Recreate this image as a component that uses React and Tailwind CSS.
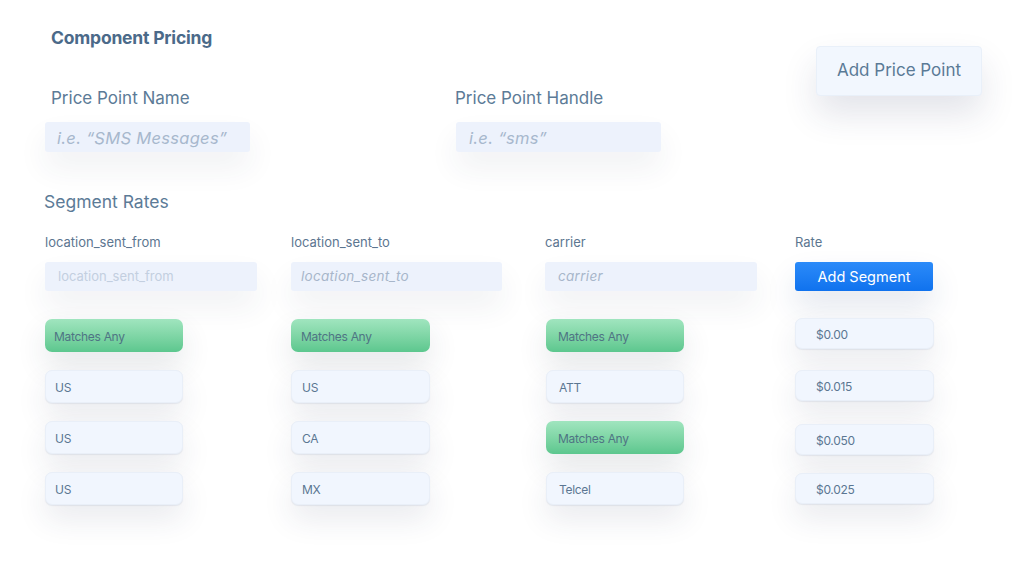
export default function App() {
  const font = { fontFamily: 'Inter, "Noto Sans", sans-serif' };
  const rowBox =
    "flex items-center pt-[2px] rounded-[7px] bg-[#f1f6fe] border border-[#e9eff8] text-[12px] tracking-[-0.3px] text-[#5b7692] shadow-[0_1px_1px_rgba(40,60,110,0.08),0_14px_30px_rgba(40,50,90,0.1)]";
  const green =
    "flex items-center pt-[2px] rounded-[7px] bg-gradient-to-b from-[#a0e5bf] to-[#5cc78e] text-[12px] tracking-[-0.3px] text-[#4f7484] shadow-[0_14px_30px_rgba(40,60,70,0.12)]";
  const col1 = ["Matches Any", "US", "US", "US"];
  const col2 = ["Matches Any", "US", "CA", "MX"];
  const col3 = ["Matches Any", "ATT", "Matches Any", "Telcel"];
  const rates = ["$0.00", "$0.015", "$0.050", "$0.025"];
  const rateTops = ["mt-[27px]", "mt-[21px]", "mt-[23px]", "mt-[18px]"];

  const Col = ({ items, w, pad }) => (
    <div className="flex flex-col gap-[18px] mt-[28px]">
      {items.map((t, i) => (
        <div
          key={i}
          className={`${t === "Matches Any" ? green : rowBox} ${w} h-[33px] ${pad}`}
        >
          {t}
        </div>
      ))}
    </div>
  );

  return (
    <div className="w-[1024px] h-[575px] bg-white overflow-hidden" style={font}>
      <div className="flex">
        <div className="flex flex-col">
          <div className="mt-[26px] ml-[51px] h-6 leading-6 text-[17.5px] font-bold text-[#4b6a89] tracking-[-0.2px]">
            Component Pricing
          </div>
          <div className="flex mt-[36px] ml-[45px]">
            <div className="flex flex-col w-[410px]">
              <div className="ml-[6px] h-6 leading-6 text-[17px] text-[#5c7b97]">
                Price Point Name
              </div>
              <div className="mt-3 w-[205px] h-[30px] rounded-[3px] bg-[#edf2fc] flex items-center pt-[3px] pl-[12px] text-[16.5px] italic text-[#a7b8cd] tracking-[0.3px] shadow-[0_16px_30px_rgba(40,50,90,0.07)]">
                i.e. “SMS Messages”
              </div>
            </div>
            <div className="flex flex-col">
              <div className="h-6 leading-6 text-[17px] text-[#5c7b97]">
                Price Point Handle
              </div>
              <div className="mt-3 ml-px w-[205px] h-[30px] rounded-[3px] bg-[#edf2fc] flex items-center pt-[3px] pl-[13px] text-[16.5px] italic text-[#a7b8cd] tracking-[0.3px] shadow-[0_16px_30px_rgba(40,50,90,0.07)]">
                i.e. “sms”
              </div>
            </div>
          </div>
        </div>
        <div className="ml-auto mr-[42px] mt-[46px] w-[166px] h-[50px] rounded-[4px] bg-[#f2f7fe] border border-[#e9f0f9] flex items-center justify-center text-[17px] text-[#5a7a96] shadow-[0_18px_34px_rgba(40,50,90,0.13)]">
          Add Price Point
        </div>
      </div>

      <div className="mt-[38px] ml-[44px] h-6 leading-6 text-[17.5px] text-[#5c7b97]">
        Segment Rates
      </div>

      <div className="flex ml-[45px] mt-[18px]">
        <div className="flex flex-col w-[246px]">
          <div className="h-5 leading-5 text-[13px] text-[#5c7690]">location_sent_from</div>
          <div className="mt-[10px] w-[212px] h-[29px] rounded-[3px] bg-[#edf2fc] flex items-center pl-[13px] text-[13px] text-[#c3cfe0] shadow-[0_16px_30px_rgba(40,50,90,0.07)]">
            location_sent_from
          </div>
          <Col items={col1} w="w-[138px]" pad="pl-[9px]" />
        </div>
        <div className="flex flex-col w-[254px]">
          <div className="h-5 leading-5 text-[13px] text-[#5c7690]">location_sent_to</div>
          <div className="mt-[10px] w-[211px] h-[29px] rounded-[3px] bg-[#edf2fc] flex items-center pl-[10px] text-[13.5px] italic tracking-[0.3px] text-[#a7b6ca] shadow-[0_16px_30px_rgba(40,50,90,0.07)]">
            location_sent_to
          </div>
          <Col items={col2} w="w-[139px]" pad="pl-[10px]" />
        </div>
        <div className="flex flex-col w-[250px]">
          <div className="h-5 leading-5 text-[13px] text-[#5c7690]">carrier</div>
          <div className="mt-[10px] w-[212px] h-[29px] rounded-[3px] bg-[#edf2fc] flex items-center pl-[13px] text-[13.5px] italic tracking-[0.3px] text-[#a7b6ca] shadow-[0_16px_30px_rgba(40,50,90,0.07)]">
            carrier
          </div>
          <div className="ml-px">
            <Col items={col3} w="w-[138px]" pad="pl-[12px]" />
          </div>
        </div>
        <div className="flex flex-col">
          <div className="h-5 leading-5 text-[13px] text-[#5c7690]">Rate</div>
          <div className="mt-[10px] w-[138px] h-[29px] rounded-[3px] bg-gradient-to-b from-[#2b8bf9] to-[#0f72ee] flex items-center justify-center text-[14.5px] text-white shadow-[0_16px_30px_rgba(30,60,120,0.13)]">
            Add Segment
          </div>
          <div className="flex flex-col">
            {rates.map((r, i) => (
              <div
                key={i}
                className={`${rowBox} ${rateTops[i]} w-[139px] h-[31px] pl-[20px] rounded-[4px]`}
              >
                {r}
              </div>
            ))}
          </div>
        </div>
      </div>
    </div>
  );
}
